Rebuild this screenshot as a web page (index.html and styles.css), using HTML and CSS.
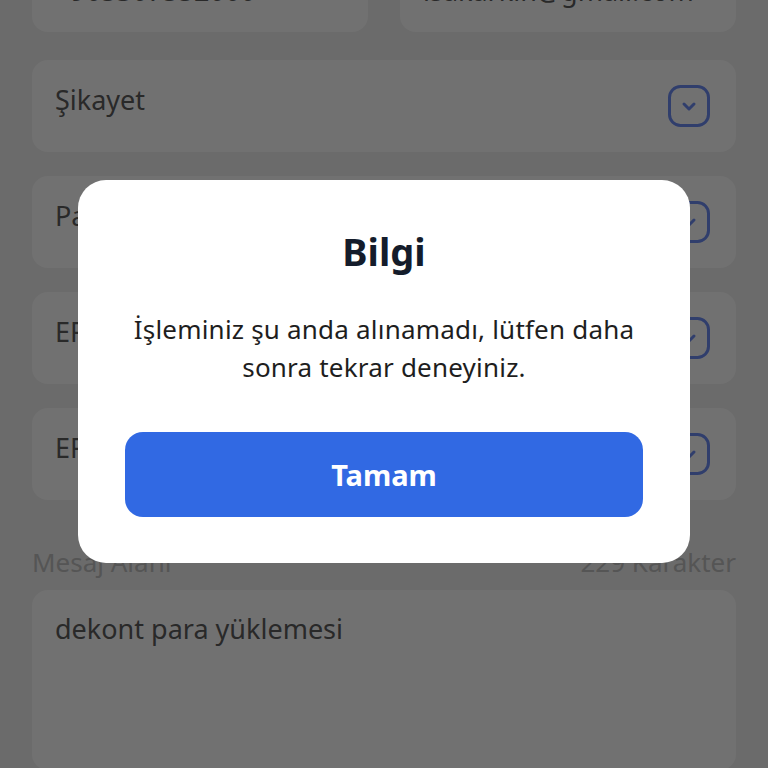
FILE: index.html
```html
<!DOCTYPE html>
<html lang="tr">
<head>
<meta charset="utf-8">
<link rel="stylesheet" href="styles.css">
</head>
<body>
<div class="page">
  <div class="row">
    <div class="card half"><span class="val">+905307552000</span></div>
    <div class="card half"><span class="val">isakarkin@gmail.com</span></div>
  </div>
  <div class="card select"><span class="val">Şikayet</span><span class="ico"><svg viewBox="0 0 42 42" width="42" height="42"><rect x="1.5" y="1.5" width="39" height="39" rx="11" fill="none" stroke="currentColor" stroke-width="3"/><path d="M16 19l5 5 5-5" fill="none" stroke="currentColor" stroke-width="3" stroke-linecap="round" stroke-linejoin="round"/></svg></span></div>
  <div class="card select"><span class="val">Para Yatırma</span><span class="ico"><svg viewBox="0 0 42 42" width="42" height="42"><rect x="1.5" y="1.5" width="39" height="39" rx="11" fill="none" stroke="currentColor" stroke-width="3"/><path d="M16 19l5 5 5-5" fill="none" stroke="currentColor" stroke-width="3" stroke-linecap="round" stroke-linejoin="round"/></svg></span></div>
  <div class="card select"><span class="val">EFT</span><span class="ico"><svg viewBox="0 0 42 42" width="42" height="42"><rect x="1.5" y="1.5" width="39" height="39" rx="11" fill="none" stroke="currentColor" stroke-width="3"/><path d="M16 19l5 5 5-5" fill="none" stroke="currentColor" stroke-width="3" stroke-linecap="round" stroke-linejoin="round"/></svg></span></div>
  <div class="card select"><span class="val">EFT</span><span class="ico"><svg viewBox="0 0 42 42" width="42" height="42"><rect x="1.5" y="1.5" width="39" height="39" rx="11" fill="none" stroke="currentColor" stroke-width="3"/><path d="M16 19l5 5 5-5" fill="none" stroke="currentColor" stroke-width="3" stroke-linecap="round" stroke-linejoin="round"/></svg></span></div>
  <div class="label-row"><span>Mesaj Alanı</span><span>229 Karakter</span></div>
  <div class="card textarea"><span class="val">dekont para yüklemesi</span></div>
</div>
<div class="overlay">
  <div class="modal">
    <h2 class="title">Bilgi</h2>
    <p class="msg">İşleminiz şu anda alınamadı, lütfen daha sonra tekrar deneyiniz.</p>
    <button class="btn">Tamam</button>
  </div>
</div>
</body>
</html>
```
FILE: styles.css
```css
html, body {
  margin: 0;
  height: 768px;
  overflow: hidden;
  background: #eeeeee;
  font-family: "Noto Sans", "Roboto", sans-serif;
}
.page {
  display: flex;
  flex-direction: column;
  gap: 24px;
  padding: 0 32px;
  margin-top: -60px;
}
.row {
  display: flex;
  gap: 32px;
  margin-bottom: 4px;
}
.card {
  background: #fbfbfb;
  border-radius: 16px;
  box-sizing: border-box;
}
.half {
  flex: 1;
  height: 92px;
  padding: 0 23px;
  display: flex;
  align-items: flex-start;
  padding-top: 34px;
}
.val {
  font-size: 27px;
  color: #5c5c5c;
  line-height: 34px;
}
.select {
  height: 92px;
  display: flex;
  align-items: center;
  justify-content: space-between;
  padding: 0 26px 0 23px;
}
.select .val {
  margin-bottom: 12px;
}
.ico {
  display: flex;
  color: #6a89f0;
}
.label-row {
  display: flex;
  justify-content: space-between;
  font-size: 26px;
  color: #bcbcbc;
  line-height: 34px;
  margin-top: 21px;
  margin-bottom: -13px;
}
.textarea {
  height: 180px;
  padding: 22px 23px;
}
.overlay {
  position: fixed;
  inset: 0;
  background: rgba(0, 0, 0, 0.55);
  display: flex;
  justify-content: center;
  align-items: flex-start;
  padding-top: 180px;
}
.modal {
  width: 612px;
  box-sizing: border-box;
  background: #ffffff;
  border-radius: 28px;
  padding: 48px 40px 46px;
  display: flex;
  flex-direction: column;
  align-items: stretch;
  text-align: center;
}
.title {
  margin: 0;
  font-size: 38px;
  line-height: 46px;
  font-weight: 700;
  color: #141c2b;
}
.msg {
  margin: 36px 0 46px;
  font-size: 26px;
  letter-spacing: 0.2px;
  line-height: 38px;
  color: #1e1e1e;
}
.btn {
  height: 85px;
  margin: 0 7px;
  border: none;
  border-radius: 18px;
  background: #3169e3;
  color: #ffffff;
  font-family: inherit;
  font-size: 29px;
  font-weight: 700;
}
```
